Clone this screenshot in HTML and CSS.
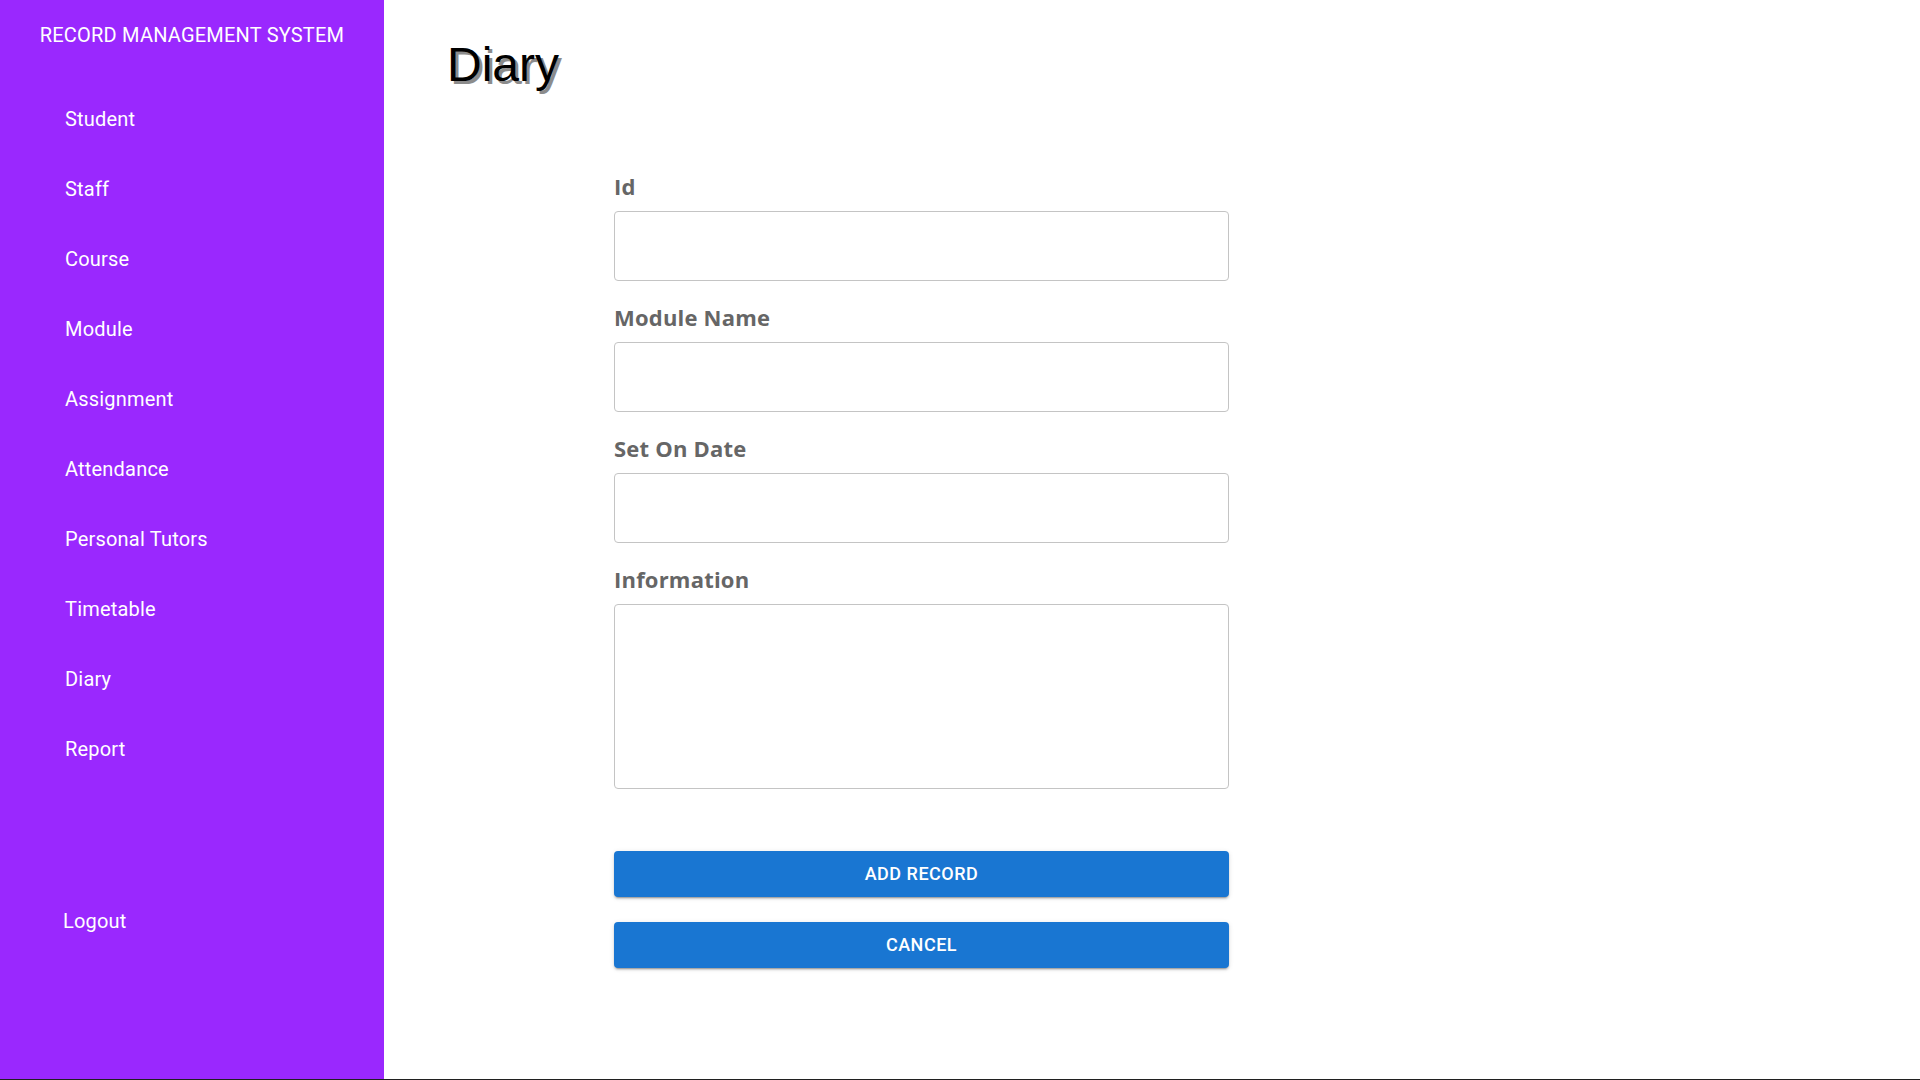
FILE: index.html
```html
<!DOCTYPE html>
<html lang="en">
<head>
<meta charset="utf-8">
<title>Diary - Record Management System</title>
<link rel="stylesheet" href="styles.css">
</head>
<body>
<div class="app">
  <aside class="sidebar">
    <div class="brand">RECORD MANAGEMENT SYSTEM</div>
    <nav class="nav">
      <a class="nav-item" href="#">Student</a>
      <a class="nav-item" href="#">Staff</a>
      <a class="nav-item" href="#">Course</a>
      <a class="nav-item" href="#">Module</a>
      <a class="nav-item" href="#">Assignment</a>
      <a class="nav-item" href="#">Attendance</a>
      <a class="nav-item" href="#">Personal Tutors</a>
      <a class="nav-item" href="#">Timetable</a>
      <a class="nav-item" href="#">Diary</a>
      <a class="nav-item" href="#">Report</a>
    </nav>
    <a class="nav-item logout" href="#">Logout</a>
  </aside>
  <main class="main">
    <h1 class="page-title">Diary</h1>
    <form class="form">
      <div class="field">
        <label class="label" for="id">Id</label>
        <input class="input" id="id" type="text">
      </div>
      <div class="field">
        <label class="label" for="module">Module Name</label>
        <input class="input" id="module" type="text">
      </div>
      <div class="field">
        <label class="label" for="date">Set On Date</label>
        <input class="input" id="date" type="text">
      </div>
      <div class="field">
        <label class="label" for="info">Information</label>
        <textarea class="input textarea" id="info"></textarea>
      </div>
      <div class="actions">
        <button class="btn" type="button">Add Record</button>
        <button class="btn" type="button">Cancel</button>
      </div>
    </form>
  </main>
</div>
</body>
</html>
```
FILE: styles.css
```css
* { box-sizing: border-box; }

html, body {
  margin: 0;
  padding: 0;
  background: #ffffff;
}

.app {
  display: flex;
  height: 1080px;
  border-bottom: 1px solid #202020;
}

.sidebar {
  width: 384px;
  flex: 0 0 384px;
  background: #9a28fe;
  display: flex;
  flex-direction: column;
  font-family: Roboto, "Liberation Sans", sans-serif;
  color: #ffffff;
}

.brand {
  padding-top: 23px;
  font-size: 20px;
  line-height: 24px;
  letter-spacing: 0.2px;
  text-align: center;
}

.nav {
  display: flex;
  flex-direction: column;
  margin-top: 37px;
}

.nav-item {
  display: block;
  height: 70px;
  line-height: 70px;
  padding-left: 65px;
  font-size: 20px;
  color: #ffffff;
  text-decoration: none;
  letter-spacing: 0.2px;
}

.logout {
  margin-top: 102px;
  padding-left: 63px;
}

.main {
  flex: 1;
  padding: 37px 0 0 63px;
}

.page-title {
  margin: 0;
  font-family: "Liberation Sans", Arial, sans-serif;
  font-size: 48px;
  font-weight: 400;
  line-height: 56px;
  color: #000000;
  text-shadow: 3px 3px 0 #8c8c8c;
}

.form {
  width: 615px;
  margin-left: 167px;
  margin-top: 79.5px;
}

.field {
  margin-bottom: 23px;
}

.field:last-of-type {
  margin-bottom: 0;
}

.label {
  display: block;
  font-family: "Open Sans", Roboto, sans-serif;
  font-weight: 700;
  font-size: 22px;
  line-height: 26px;
  letter-spacing: 0.2px;
  color: #666666;
  margin-bottom: 12px;
}

.input {
  display: block;
  width: 100%;
  height: 70px;
  border: 1px solid #c4c4c4;
  border-radius: 4px;
  background: #ffffff;
  font-family: Roboto, sans-serif;
  font-size: 18px;
  padding: 0 14px;
  outline: none;
}

.textarea {
  height: 185px;
  resize: none;
  padding: 14px;
}

.actions {
  display: flex;
  flex-direction: column;
  gap: 25px;
  margin-top: 62px;
}

.btn {
  display: block;
  width: 100%;
  height: 46px;
  border: none;
  border-radius: 4px;
  background: #1976d2;
  color: #ffffff;
  font-family: Roboto, sans-serif;
  font-weight: 500;
  font-size: 18px;
  letter-spacing: 0.5px;
  text-transform: uppercase;
  box-shadow: 0 3px 1px -2px rgba(0,0,0,0.2), 0 2px 2px 0 rgba(0,0,0,0.14), 0 1px 5px 0 rgba(0,0,0,0.12);
  cursor: pointer;
}
```
